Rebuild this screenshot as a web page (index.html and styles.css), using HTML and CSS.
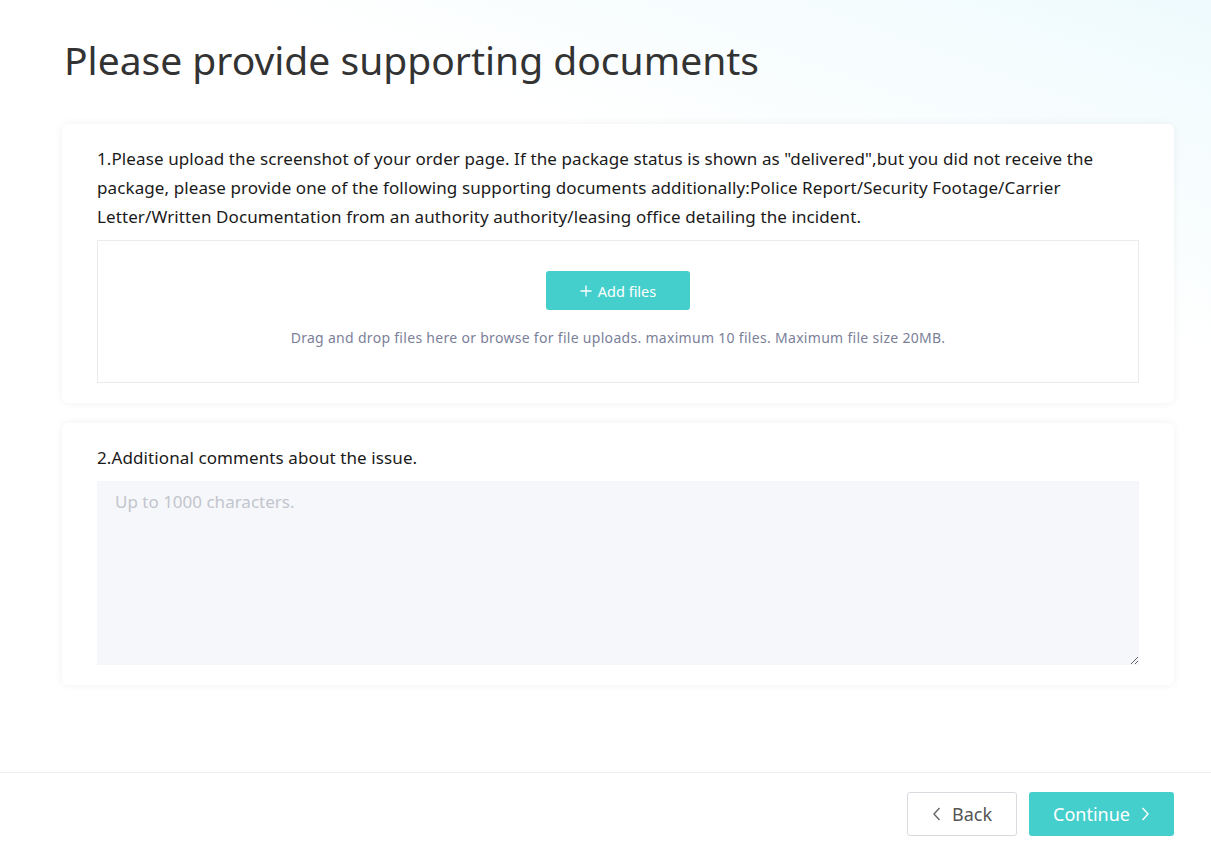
FILE: index.html
```html
<!DOCTYPE html>
<html lang="en">
<head>
  <meta charset="UTF-8" />
  <title>Supporting documents</title>
  <link rel="stylesheet" href="styles.css">
</head>
<body>
  <div class="page">
    <h1 class="title">Please provide supporting documents</h1>

    <section class="card">
      <p class="question">1.Please upload the screenshot of your order page. If the package status is shown as "delivered",but you did not receive the package, please provide one of the following supporting documents additionally:Police Report/Security Footage/Carrier Letter/Written Documentation from an authority authority/leasing office detailing the incident.</p>
      <div class="dropzone">
        <button class="btn-add" type="button">
          <svg width="12" height="12" viewBox="0 0 12 12"><path d="M6 0.5v11M0.5 6h11" stroke="#fff" stroke-width="1.3" fill="none"/></svg>
          Add files
        </button>
        <p class="hint">Drag and drop files here or browse for file uploads. maximum 10 files. Maximum file size 20MB.</p>
      </div>
    </section>

    <section class="card">
      <p class="question">2.Additional comments about the issue.</p>
      <textarea class="comments" placeholder="Up to 1000 characters."></textarea>
    </section>
  </div>

  <footer class="footer">
    <button class="btn-back" type="button">
      <svg width="10" height="14" viewBox="0 0 10 14"><path d="M7.5 1L2 7l5.5 6" stroke="#666" stroke-width="1.4" fill="none"/></svg>
      Back
    </button>
    <button class="btn-continue" type="button">
      Continue
      <svg width="10" height="14" viewBox="0 0 10 14"><path d="M2.5 1L8 7l-5.5 6" stroke="#fff" stroke-width="1.4" fill="none"/></svg>
    </button>
  </footer>
</body>
</html>
```

FILE: styles.css
```css
body {
  margin: 0;
  font-family: "Noto Sans", "Open Sans", sans-serif;
  color: #222;
  background: linear-gradient(200deg, #eefafd 0%, #ffffff 28%, #ffffff 100%);
  min-height: 842px;
}

.page {
  padding: 30px 37px 0 62px;
  height: 772px;
  box-sizing: border-box;
}

.title {
  margin: 0 0 34px 2px;
  font-size: 39px;
  font-weight: 400;
  line-height: 60px;
  color: #333;
}

/* Cards */
.card {
  background: #fff;
  border-radius: 6px;
  box-shadow: 0 0 8px rgba(0, 0, 0, 0.06);
  padding: 20px 35px 20px 35px;
  margin-bottom: 20px;
}

.question {
  margin: 0 0 9px;
  font-size: 17px;
  letter-spacing: 0.1px;
  line-height: 29px;
  color: #1a1a1a;
}

.dropzone {
  border: 1px solid #ebebeb;
  padding: 30px 0 34px;
  display: flex;
  flex-direction: column;
  align-items: center;
}

.btn-add {
  width: 144px;
  height: 39px;
  border: none;
  border-radius: 3px;
  background: #45cfcc;
  color: #fff;
  font-family: inherit;
  font-size: 14.5px;
  display: flex;
  align-items: center;
  justify-content: center;
  gap: 6px;
  cursor: pointer;
}

.hint {
  margin: 18px 0 0;
  font-size: 14px;
  letter-spacing: 0.3px;
  line-height: 20px;
  color: #7b7f99;
}

.comments {
  display: block;
  width: 100%;
  height: 184px;
  box-sizing: border-box;
  border: none;
  background: #f6f7fb;
  padding: 9px 18px;
  font-family: inherit;
  font-size: 17px;
  color: #333;
  resize: vertical;
}

.comments::placeholder {
  color: #c2c5cc;
}

/* Footer */
.footer {
  border-top: 1px solid #eeeeee;
  display: flex;
  justify-content: flex-end;
  gap: 12px;
  padding: 19px 37px 0 0;
  height: 50px;
}

.btn-back,
.btn-continue {
  height: 44px;
  border-radius: 3px;
  font-family: inherit;
  font-size: 18px;
  display: flex;
  align-items: center;
  justify-content: center;
  gap: 10px;
  cursor: pointer;
}

.btn-back {
  width: 110px;
  background: #fff;
  border: 1px solid #d9d9e0;
  color: #555;
}

.btn-continue {
  width: 145px;
  background: #45cfcc;
  border: none;
  color: #fff;
}
```
